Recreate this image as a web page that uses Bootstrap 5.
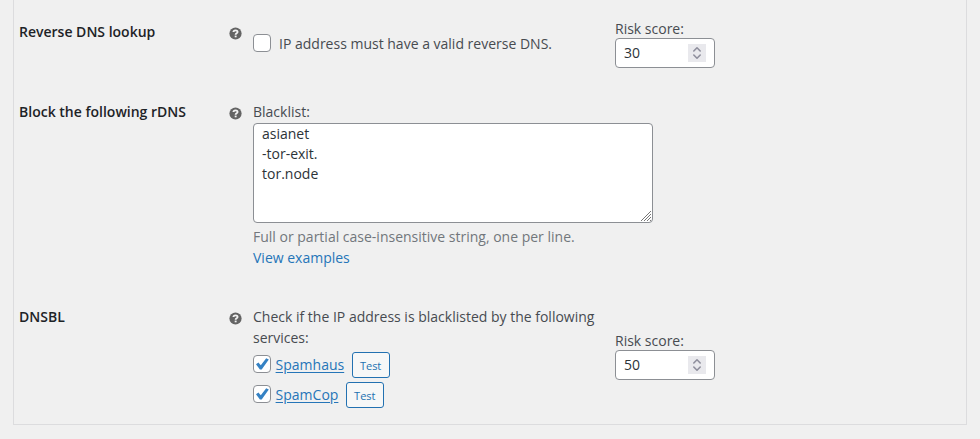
<!DOCTYPE html>
<html lang="en">
<head>
<meta charset="utf-8">
<title>DNS rules</title>
<link href="https://cdn.jsdelivr.net/npm/bootstrap@5.3.0/dist/css/bootstrap.min.css" rel="stylesheet">
<style>
body{background:#f0f0f0;color:#474b50;font:14px/21px "Open Sans","Noto Sans",sans-serif;height:439px;overflow:hidden}
.panel{width:954px;height:425px;margin-left:13px;border:1px solid #dcdcde;border-top:0;padding:18px 0 0 5px}
.rule{display:grid;grid-template-columns:210px 24px 362px 1fr}
.rule-one{height:80px}.rule-two{height:205px}
.rule h2{font-size:14px;line-height:21px;font-weight:600;color:#1d2327;margin:3px 0 0}
.help{width:13px;height:13px;margin-top:9px}
.opt{padding-top:3px}
.single{padding-top:15px}
.single .tick{margin-top:-1px!important}
.risk{line-height:22px;margin-bottom:-2px}
.risk-low{padding-top:27px}
.form-check-input.tick{width:18px;height:18px;margin:0;border:1px solid #8c8f94;border-radius:4px;background-color:#fff;flex:none}
.form-check-input.tick:checked{background-color:#fff;border-color:#8c8f94;background-size:18px;background-image:url("data:image/svg+xml,%3Csvg xmlns='http://www.w3.org/2000/svg' viewBox='0 0 18 18'%3E%3Cpath d='M3 9.3 5.4 7.6 7.8 10.2 13.2 3.2 15.8 4.6 8.7 14.5H6.9Z' fill='%233582c4'/%3E%3C/svg%3E")}
.score{width:100px;height:30px;border:1px solid #8c8f94;border-radius:4px;background:#fff;color:#2c3338;padding:0 8px}
.score span{line-height:20px;padding-bottom:1px}
.spin{width:18px;height:18px;background:#e9e9ed}
.names-wrap{width:400px;margin-top:1px}
.form-control.names{width:400px;height:100px;min-height:0;border:1px solid #8c8f94;border-radius:4px;padding:0 8px;font-size:14px;line-height:20px;color:#2c3338;resize:none;overflow:hidden;display:block}
.grip{position:absolute;right:1px;bottom:1px}
.hint{color:#72777c;margin-top:3px}
a{color:#2575b8}
.services{padding-top:4px}
.services a{text-underline-offset:2px;margin:-2px 0 0 4.6px}
.services .tick{margin-top:-3px!important}
.btn.test{height:26px;width:38px;margin-left:7.4px;padding:0;font-size:11px;line-height:25px;border:1px solid #2271b1;border-radius:3px;background:#f6f7f7;color:#2271b1}
</style>
<script src="https://cdn.jsdelivr.net/npm/bootstrap@5.3.0/dist/js/bootstrap.bundle.min.js"></script>
</head>
<body>
<svg class="d-none"><symbol id="help" viewBox="0 0 13 13"><circle cx="6.5" cy="6.5" r="6.1" fill="#646464"/><path d="M4.4 5C4.5 2.7 8.6 2.7 8.6 5 8.6 6.4 6.6 6.2 6.6 7.8" fill="none" stroke="#f3f3f3" stroke-width="1.8"/><path d="M5.7 8.6h1.9v1.7H5.7z" fill="#f3f3f3"/></symbol>
<symbol id="spin" viewBox="0 0 18 18"><path d="M5.8 7 9 3.8 12.2 7M5.8 11 9 14.2 12.2 11" fill="none" stroke="#8f8f9d" stroke-width="1.6" stroke-linecap="round" stroke-linejoin="round"/></symbol></svg>
<main class="panel">
  <section class="rule rule-one">
    <h2>Reverse DNS lookup</h2>
    <svg class="help"><use href="#help"/></svg>
    <div class="single"><label class="d-flex align-items-center"><input class="form-check-input tick" type="checkbox"><span class="ms-2">IP address must have a valid reverse DNS.</span></label></div>
    <div><div class="risk">Risk score:</div><div class="score d-flex align-items-center justify-content-between"><span>30</span><svg class="spin"><use href="#spin"/></svg></div></div>
  </section>
  <section class="rule rule-two">
    <h2>Block the following rDNS</h2>
    <svg class="help"><use href="#help"/></svg>
    <div class="opt"><label for="names" class="d-block">Blacklist:</label>
      <div class="position-relative names-wrap"><textarea id="names" class="form-control names">asianet
-tor-exit.
tor.node</textarea><svg class="grip" width="12" height="12" viewBox="0 0 12 12"><path d="M1 11 11 1M4 11 11 4M7 11 11 7M10 11 11 10" stroke="#777" stroke-width="1" fill="none"/></svg></div>
      <div class="hint">Full or partial case-insensitive string, one per line.</div>
      <a href="#" class="text-decoration-none">View examples</a></div>
  </section>
  <section class="rule">
    <h2>DNSBL</h2>
    <svg class="help"><use href="#help"/></svg>
    <div class="opt"><div>Check if the IP address is blacklisted by the following services:</div>
      <div class="services d-flex flex-column gap-1"><div class="d-flex align-items-center"><input class="form-check-input tick" type="checkbox" checked><a href="#">Spamhaus</a><button class="btn test">Test</button></div>
      <div class="d-flex align-items-center"><input class="form-check-input tick" type="checkbox" checked><a href="#">SpamCop</a><button class="btn test">Test</button></div></div></div>
    <div class="risk-low"><div class="risk">Risk score:</div><div class="score d-flex align-items-center justify-content-between"><span>50</span><svg class="spin"><use href="#spin"/></svg></div></div>
  </section>
</main>
</body>
</html>
